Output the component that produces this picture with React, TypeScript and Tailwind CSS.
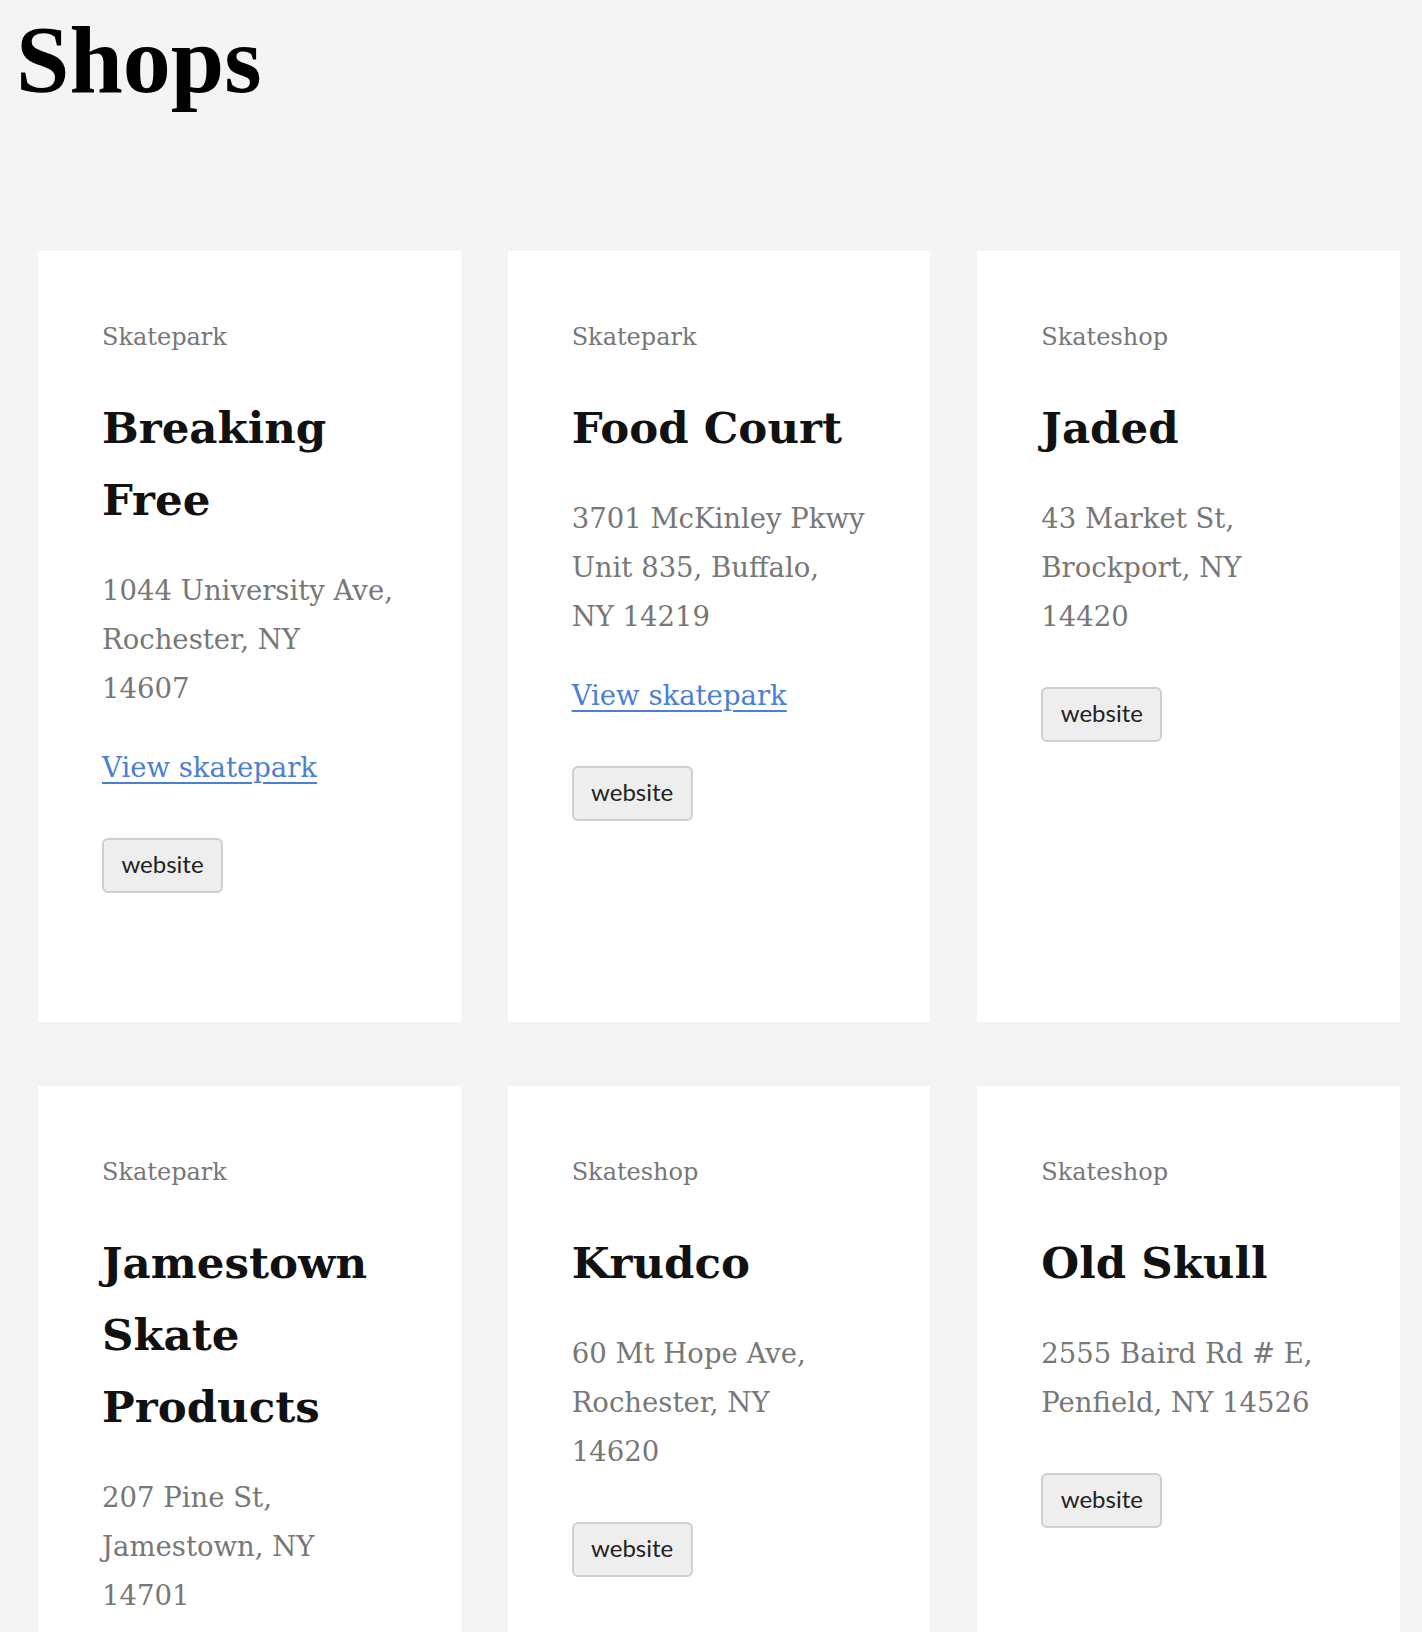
type Shop = {
  id: number;
  kind: "Skatepark" | "Skateshop";
  name: string;
  address: string[];
  park?: boolean;
};

const shops: Shop[] = [
  {
    id: 1,
    kind: "Skatepark",
    name: "Breaking Free",
    address: ["1044 University Ave,", "Rochester, NY", "14607"],
    park: true,
  },
  {
    id: 2,
    kind: "Skatepark",
    name: "Food Court",
    address: ["3701 McKinley Pkwy", "Unit 835, Buffalo,", "NY 14219"],
    park: true,
  },
  {
    id: 3,
    kind: "Skateshop",
    name: "Jaded",
    address: ["43 Market St,", "Brockport, NY", "14420"],
  },
  {
    id: 4,
    kind: "Skatepark",
    name: "Jamestown Skate Products",
    address: ["207 Pine St,", "Jamestown, NY", "14701"],
  },
  {
    id: 5,
    kind: "Skateshop",
    name: "Krudco",
    address: ["60 Mt Hope Ave,", "Rochester, NY", "14620"],
  },
  {
    id: 6,
    kind: "Skateshop",
    name: "Old Skull",
    address: ["2555 Baird Rd # E,", "Penfield, NY 14526"],
  },
];

function ShopCard({ shop }: { shop: Shop }) {
  return (
    <div className="bg-white px-16 pt-[68px] pb-[65px] font-['DejaVu_Serif',Georgia,serif]">
      <p className="text-[24px] leading-[36px] text-[#777]">{shop.kind}</p>
      <h2 className="mt-[37px] text-[43.5px] leading-[72px] font-bold text-[#111]">
        {shop.name}
      </h2>
      <p className="mt-[30px] text-[27.5px] leading-[49px] text-[#777]">
        {shop.address.map((line) => (
          <span key={line} className="block whitespace-nowrap">
            {line}
          </span>
        ))}
      </p>
      {shop.park && (
        <a
          href="#"
          className="mt-[30px] block text-[27.5px] leading-[49px] text-[#4a7fd6] underline underline-offset-[5px] decoration-[1.5px]"
        >
          View skatepark
        </a>
      )}
      <button className="mt-[46px] mb-16 h-[55px] w-[121px] rounded-[6px] border-2 border-[#cfcfcf] bg-[#eeeeee] pb-[3px] font-['Lato',sans-serif] text-[24px] text-[#222]">
        website
      </button>
    </div>
  );
}

export default function App() {
  return (
    <div className="min-h-screen bg-[#f4f4f4] pb-10">
      <h1 className="pl-4 font-['Liberation_Serif',serif] text-[96px] leading-[120px] font-bold text-black">
        Shops
      </h1>
      <div className="mt-[131px] pl-[38px] pr-[22px] grid grid-cols-3 gap-x-[47px] gap-y-16">
        {shops.map((shop) => (
          <ShopCard key={shop.id} shop={shop} />
        ))}
      </div>
    </div>
  );
}
